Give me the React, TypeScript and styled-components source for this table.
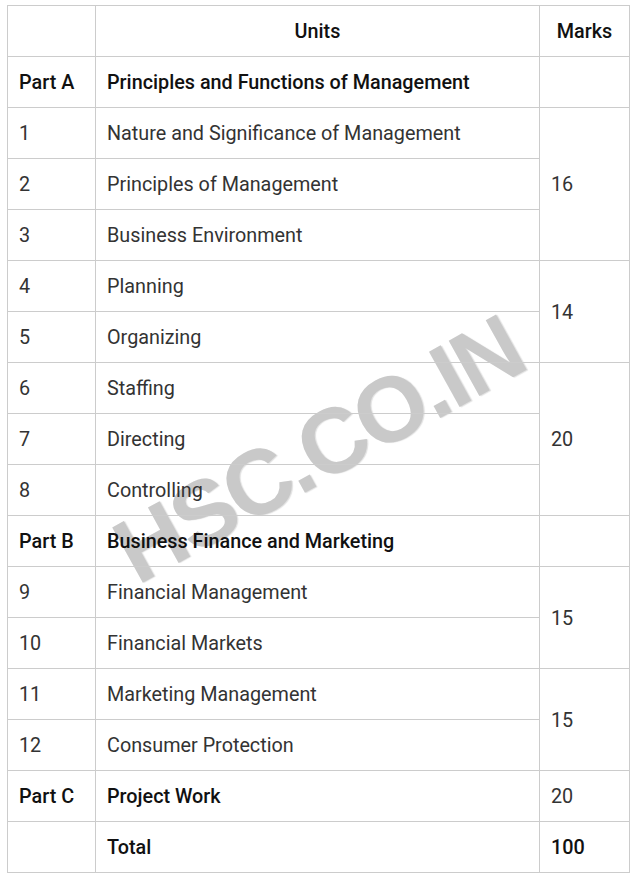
import React from "react";
import styled, { createGlobalStyle } from "styled-components";

const Global = createGlobalStyle`
  html, body { margin: 0; padding: 0; background: #ffffff; }
  body { font-family: Roboto, "Liberation Sans", Arial, sans-serif; }
`;

const Page = styled.div`
  position: relative;
  padding: 5px 0 0 7px;
  width: 622px;
`;

const Watermark = styled.div`
  position: absolute;
  left: 318px;
  top: 449px;
  transform: translate(-50%, -50%) rotate(-29deg);
  font-family: "Liberation Sans", Arial, sans-serif;
  font-weight: 700;
  font-size: 92px;
  letter-spacing: -3px;
  line-height: 1;
  color: #c9c9c9;
  white-space: nowrap;
  text-shadow: 1px 1px 1px rgba(0, 0, 0, 0.12);
  z-index: 0;
  pointer-events: none;
`;

const Table = styled.table`
  position: relative;
  z-index: 1;
  border-collapse: collapse;
  width: 622px;
  table-layout: fixed;
  background: transparent;
`;

const Row = styled.tr`
  height: 51px;
`;

const Cell = styled.td<{ $strong?: boolean; $center?: boolean }>`
  border: 1px solid #cccccc;
  padding: 2px 11px 0;
  font-size: 19.8px;
  line-height: 24px;
  vertical-align: middle;
  text-align: ${(p) => (p.$center ? "center" : "left")};
  color: ${(p) => (p.$strong ? "#111111" : "#333333")};
  font-weight: ${(p) => (p.$strong ? 500 : 400)};
  white-space: nowrap;
`;

type Item = {
  a: string;
  b: string;
  m?: { v: string; span: number; strong?: boolean };
  strong?: boolean;
};

const rows: Item[] = [
  { a: "Part A", b: "Principles and Functions of Management", m: { v: "", span: 1 }, strong: true },
  { a: "1", b: "Nature and Significance of Management", m: { v: "16", span: 3 } },
  { a: "2", b: "Principles of Management" },
  { a: "3", b: "Business Environment" },
  { a: "4", b: "Planning", m: { v: "14", span: 2 } },
  { a: "5", b: "Organizing" },
  { a: "6", b: "Staffing", m: { v: "20", span: 3 } },
  { a: "7", b: "Directing" },
  { a: "8", b: "Controlling" },
  { a: "Part B", b: "Business Finance and Marketing", m: { v: "", span: 1 }, strong: true },
  { a: "9", b: "Financial Management", m: { v: "15", span: 2 } },
  { a: "10", b: "Financial Markets" },
  { a: "11", b: "Marketing Management", m: { v: "15", span: 2 } },
  { a: "12", b: "Consumer Protection" },
  { a: "Part C", b: "Project Work", m: { v: "20", span: 1 }, strong: true },
  { a: "", b: "Total", m: { v: "100", span: 1, strong: true }, strong: true },
];

export default function App() {
  return (
    <>
      <Global />
      <Page>
        <Watermark>HSC.CO.IN</Watermark>
        <Table>
          <colgroup>
            <col style={{ width: 88 }} />
            <col style={{ width: 444 }} />
            <col style={{ width: 90 }} />
          </colgroup>
          <tbody>
            <Row>
              <Cell />
              <Cell $strong $center>
                Units
              </Cell>
              <Cell $strong $center>
                Marks
              </Cell>
            </Row>
            {rows.map((r, i) => (
              <Row key={i}>
                <Cell $strong={r.strong}>{r.a}</Cell>
                <Cell $strong={r.strong}>{r.b}</Cell>
                {r.m && (
                  <Cell rowSpan={r.m.span} $strong={r.m.strong}>
                    {r.m.v}
                  </Cell>
                )}
              </Row>
            ))}
          </tbody>
        </Table>
      </Page>
    </>
  );
}
